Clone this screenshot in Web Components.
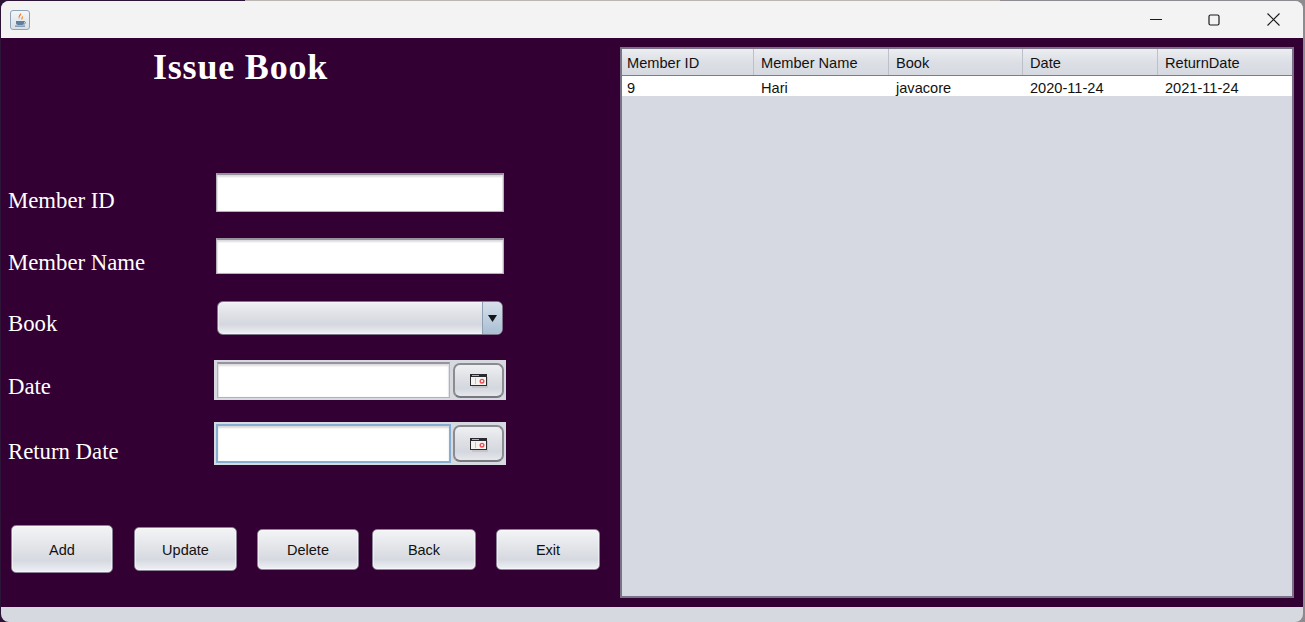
<!DOCTYPE html>
<html lang="en"><head><meta charset="utf-8"><title>Issue Book</title>
<style>
html,body{margin:0;height:100%;overflow:hidden;background:#2c1436}
body{background:linear-gradient(90deg,#2c1436 0 245px,#b9b6b4 245px 1000px,#8d8a90 1000px)}
</style></head><body>
<x-window>
  <x-titlebar slot="title"></x-titlebar>
  <x-form-panel>
    <x-heading>Issue Book</x-heading>
    <x-form-row label="Member ID" style="--h:39px;--indent:0px;--w:288px;--drop:8px"><x-text-field></x-text-field></x-form-row>
    <x-form-row label="Member Name" style="--h:36px;--w:288px;--gap:26px;--drop:7px"><x-text-field></x-text-field></x-form-row>
    <x-form-row label="Book" style="--h:34px;--indent:1px;--w:286px;--gap:27px;--drop:6px"><x-combo-box></x-combo-box></x-form-row>
    <x-form-row label="Date" style="--h:40px;--indent:-2px;--w:292px;--gap:25px;--drop:7px"><x-date-picker></x-date-picker></x-form-row>
    <x-form-row label="Return Date" style="--h:43px;--indent:-2px;--w:292px;--gap:22px;--drop:8px"><x-date-picker focused></x-date-picker></x-form-row>
    <x-button-bar>
      <x-push-button style="--w:102px;--bh:48px;--ml:10px;--mt:0px">Add</x-push-button>
      <x-push-button style="--w:103px;--bh:44px;--ml:21px;--mt:2px">Update</x-push-button>
      <x-push-button style="--w:102px;--bh:41px;--ml:20px;--mt:4px">Delete</x-push-button>
      <x-push-button style="--w:104px;--bh:41px;--ml:13px;--mt:4px">Back</x-push-button>
      <x-push-button style="--w:104px;--bh:41px;--ml:20px;--mt:4px">Exit</x-push-button>
    </x-button-bar>
  </x-form-panel>
  <x-data-table></x-data-table>
</x-window>
<template id="calicon"><svg width="18" height="14" viewBox="0 0 18 14" aria-hidden="true">
  <rect x="2" y="3" width="16" height="11" fill="#c4c6cb"/>
  <rect x="0" y="0" width="17" height="12" fill="#2a2a30"/>
  <rect x="1" y="3" width="15" height="8" fill="#f4f3f0"/>
  <rect x="2" y="1" width="7" height="1" fill="#e0a850"/>
  <rect x="5" y="4" width="1" height="6" fill="#c4c4c4"/>
  <circle cx="12" cy="7.2" r="1.8" fill="none" stroke="#e8505a" stroke-width="1.4"/>
</svg></template>
<script>
function shadow(el,html){el.attachShadow({mode:'open'}).innerHTML=html;return el.shadowRoot}

customElements.define('x-window',class extends HTMLElement{constructor(){super();shadow(this,`<style>
:host{display:block;width:1305px;height:622px;box-sizing:border-box;padding:1px 2px 0 1px}
.win{height:100%;background:#d6d9df;border-radius:8px;overflow:hidden;display:flex;flex-direction:column}
.body{height:569px;background:#330033;display:flex;align-items:flex-start}
.foot{flex:1}
</style><div class="win"><slot name="title"></slot><div class="body"><slot></slot></div><div class="foot"></div></div>`)}});

customElements.define('x-titlebar',class extends HTMLElement{constructor(){super();shadow(this,`<style>
:host{display:flex;align-items:center;height:37px;background:#f3f3f3;box-sizing:border-box}
.app{margin-left:9px;width:20px;height:20px;box-sizing:border-box;border:1px solid #8fa3b8;border-radius:3px;background:linear-gradient(#f4f6f8,#d9dfe6);display:flex;align-items:center;justify-content:center}
.ctl{margin-left:auto;display:flex;align-items:center}
.ctl svg{display:block}
</style>
<div class="app"><svg width="14" height="16" viewBox="0 0 14 16" aria-hidden="true">
<path d="M8 1C9 3 5.5 4.5 6.5 7.5 4.8 5.8 5.5 3.5 8 1Z" fill="#e8762b"/><path d="M9.5 3.5C9 5 7.5 6 8.5 8 10.5 6.5 10.5 5 9.5 3.5Z" fill="#f0a050"/>
<path d="M3 9h8v2.2C11 12.5 9.8 13 7 13s-4-.5-4-1.8Z" fill="#5f7f9e"/><path d="M11 9.5c2 0 2 2.5-.5 2.7" fill="none" stroke="#5f7f9e"/>
<path d="M2 14.2h10" stroke="#6d89a6" stroke-width="1.2"/></svg></div>
<div class="ctl">
<svg style="margin-right:46px" width="12" height="12" viewBox="0 0 12 12"><path d="M0 5.5h12" stroke="#1a1a1a"/></svg>
<svg style="margin-right:47px" width="12" height="12" viewBox="0 0 12 12"><rect x="1" y="1" width="10" height="10" rx="1.5" fill="none" stroke="#1a1a1a" stroke-width="1.2"/></svg>
<svg style="margin-right:23px" width="13" height="13" viewBox="0 0 13 13"><path d="M.5.5l12 12M12.5.5l-12 12" stroke="#1a1a1a" stroke-width="1.1"/></svg>
</div>`)}});

customElements.define('x-form-panel',class extends HTMLElement{constructor(){super();shadow(this,`<style>
:host{display:flex;flex-direction:column;width:619px;flex:none}
</style><slot></slot>`)}});

customElements.define('x-heading',class extends HTMLElement{constructor(){super();shadow(this,`<style>
:host{display:block;height:135px;box-sizing:border-box;padding:6px 0 0 152px;font:bold 36px/46px "Liberation Serif",serif;color:#fff;letter-spacing:.8px}
</style><slot></slot>`)}});

customElements.define('x-form-row',class extends HTMLElement{constructor(){super();shadow(this,`<style>
:host{display:flex;align-items:center;height:var(--h);margin-top:var(--gap,0);color:#fff;font:22.75px/28px "Liberation Serif",serif}
.l{width:215px;flex:none;padding:calc(var(--drop)*2) 0 0 7px;box-sizing:border-box;margin-right:var(--indent,0);white-space:nowrap}
.c{width:var(--w);height:100%;flex:none}
</style><div class="l"></div><div class="c"><slot></slot></div>`);
this.shadowRoot.querySelector('.l').textContent=this.getAttribute('label')}});

const fieldCss=`background:#fff;box-sizing:border-box;border:1px solid #b4b2b8;border-top:2px solid #96929e;box-shadow:inset 0 2px 2px #dcdce0,inset 1px 0 1px #e6e6ea,inset -1px 0 1px #e6e6ea`;
customElements.define('x-text-field',class extends HTMLElement{constructor(){super();shadow(this,`<style>
:host{display:block;height:100%;${fieldCss}}
</style>`)}});

customElements.define('x-combo-box',class extends HTMLElement{constructor(){super();shadow(this,`<style>
:host{display:flex;height:100%;box-sizing:border-box;border:1px solid #7d7489;border-radius:6px;overflow:hidden;background:linear-gradient(#f0f1f3 0,#e0e2e7 35%,#d4d7de 70%,#eef0f4 100%);box-shadow:inset 0 0 0 1px #ffffff66}
.sp{flex:1}
.ar{width:19px;border-left:1px solid #8c9fb3;background:linear-gradient(#d7e0ea,#a9bfd4);display:flex;align-items:center;justify-content:center}
</style><div class="sp"></div><div class="ar"><svg width="9" height="7" viewBox="0 0 9 7"><path d="M0 0h9L4.5 7Z" fill="#15151c"/></svg></div>`)}});

customElements.define('x-date-picker',class extends HTMLElement{constructor(){super();shadow(this,`<style>
:host{display:flex;align-items:center;height:100%;box-sizing:border-box;background:#d6d9df;padding:2px 2px 2px 3px}
.f{width:233px;height:100%;${fieldCss};flex:none}
:host([focused]) .f{width:235px;margin-left:-1px;border:2px solid #86aed2;box-shadow:inset 0 2px 2px #d8d8dc}
:host([focused]) .b{height:37px;margin-left:2px}
.b{margin-left:3px;width:51px;height:35px;box-sizing:border-box;padding-top:2px;border:2px solid #8b8b92;border-bottom-color:#77777f;border-radius:7px;background:linear-gradient(#eff0f2,#dfe1e6 40%,#d4d7de 75%,#e6e8ec);display:flex;align-items:center;justify-content:center;flex:none}
</style><div class="f"></div><div class="b"></div>`);
this.shadowRoot.querySelector('.b').append(document.getElementById('calicon').content.cloneNode(true))}});

customElements.define('x-button-bar',class extends HTMLElement{constructor(){super();shadow(this,`<style>
:host{display:flex;align-items:flex-start;margin-top:60px}
</style><slot></slot>`)}});

customElements.define('x-push-button',class extends HTMLElement{constructor(){super();shadow(this,`<style>
:host{display:flex;align-items:center;justify-content:center;flex:none;box-sizing:border-box;padding-top:1px;width:var(--w);height:var(--bh);margin-left:var(--ml);margin-top:var(--mt);border:1px solid #8b8395;border-radius:5px;background:linear-gradient(#f3f4f6 0,#e4e6ea 40%,#d6d9e0 75%,#eef0f5 100%);box-shadow:inset 0 0 1px 1px #ffffff80;font:14.5px "Liberation Sans",sans-serif;color:#111}
</style><slot></slot>`)}});

customElements.define('x-data-table',class extends HTMLElement{constructor(){super();
const cols=['Member ID','Member Name','Book','Date','ReturnDate'],row=['9','Hari','javacore','2020-11-24','2021-11-24'];
shadow(this,`<style>
:host{display:block;width:674px;height:551px;margin:9px 0 0 0;box-sizing:border-box;border:2px solid #7a7388;background:#d6d9e2;font:14.6px "Liberation Sans",sans-serif;color:#111}
.g{display:grid;grid-template-columns:132px 135px 134px 135px 135px}
.h{height:27px;box-sizing:border-box;border-bottom:1px solid #7f7a8e;background:linear-gradient(#eceef1,#dcdfe5 50%,#d6d9e0)}
.h div{padding:4px 0 0 7px;border-right:1px solid #bcc0c9;line-height:20px;box-sizing:border-box}
.h div:last-child{border-right:0}
.h div:first-child,.r div:first-child{padding-left:5px}
.r{background:#fff;height:20px;line-height:24px}
.r div{padding-left:7px;height:20px;overflow:visible}
</style><div class="g h">${cols.map(c=>`<div>${c}</div>`).join('')}</div><div class="g r">${row.map(c=>`<div>${c}</div>`).join('')}</div>`)}});
</script>
</body></html>
